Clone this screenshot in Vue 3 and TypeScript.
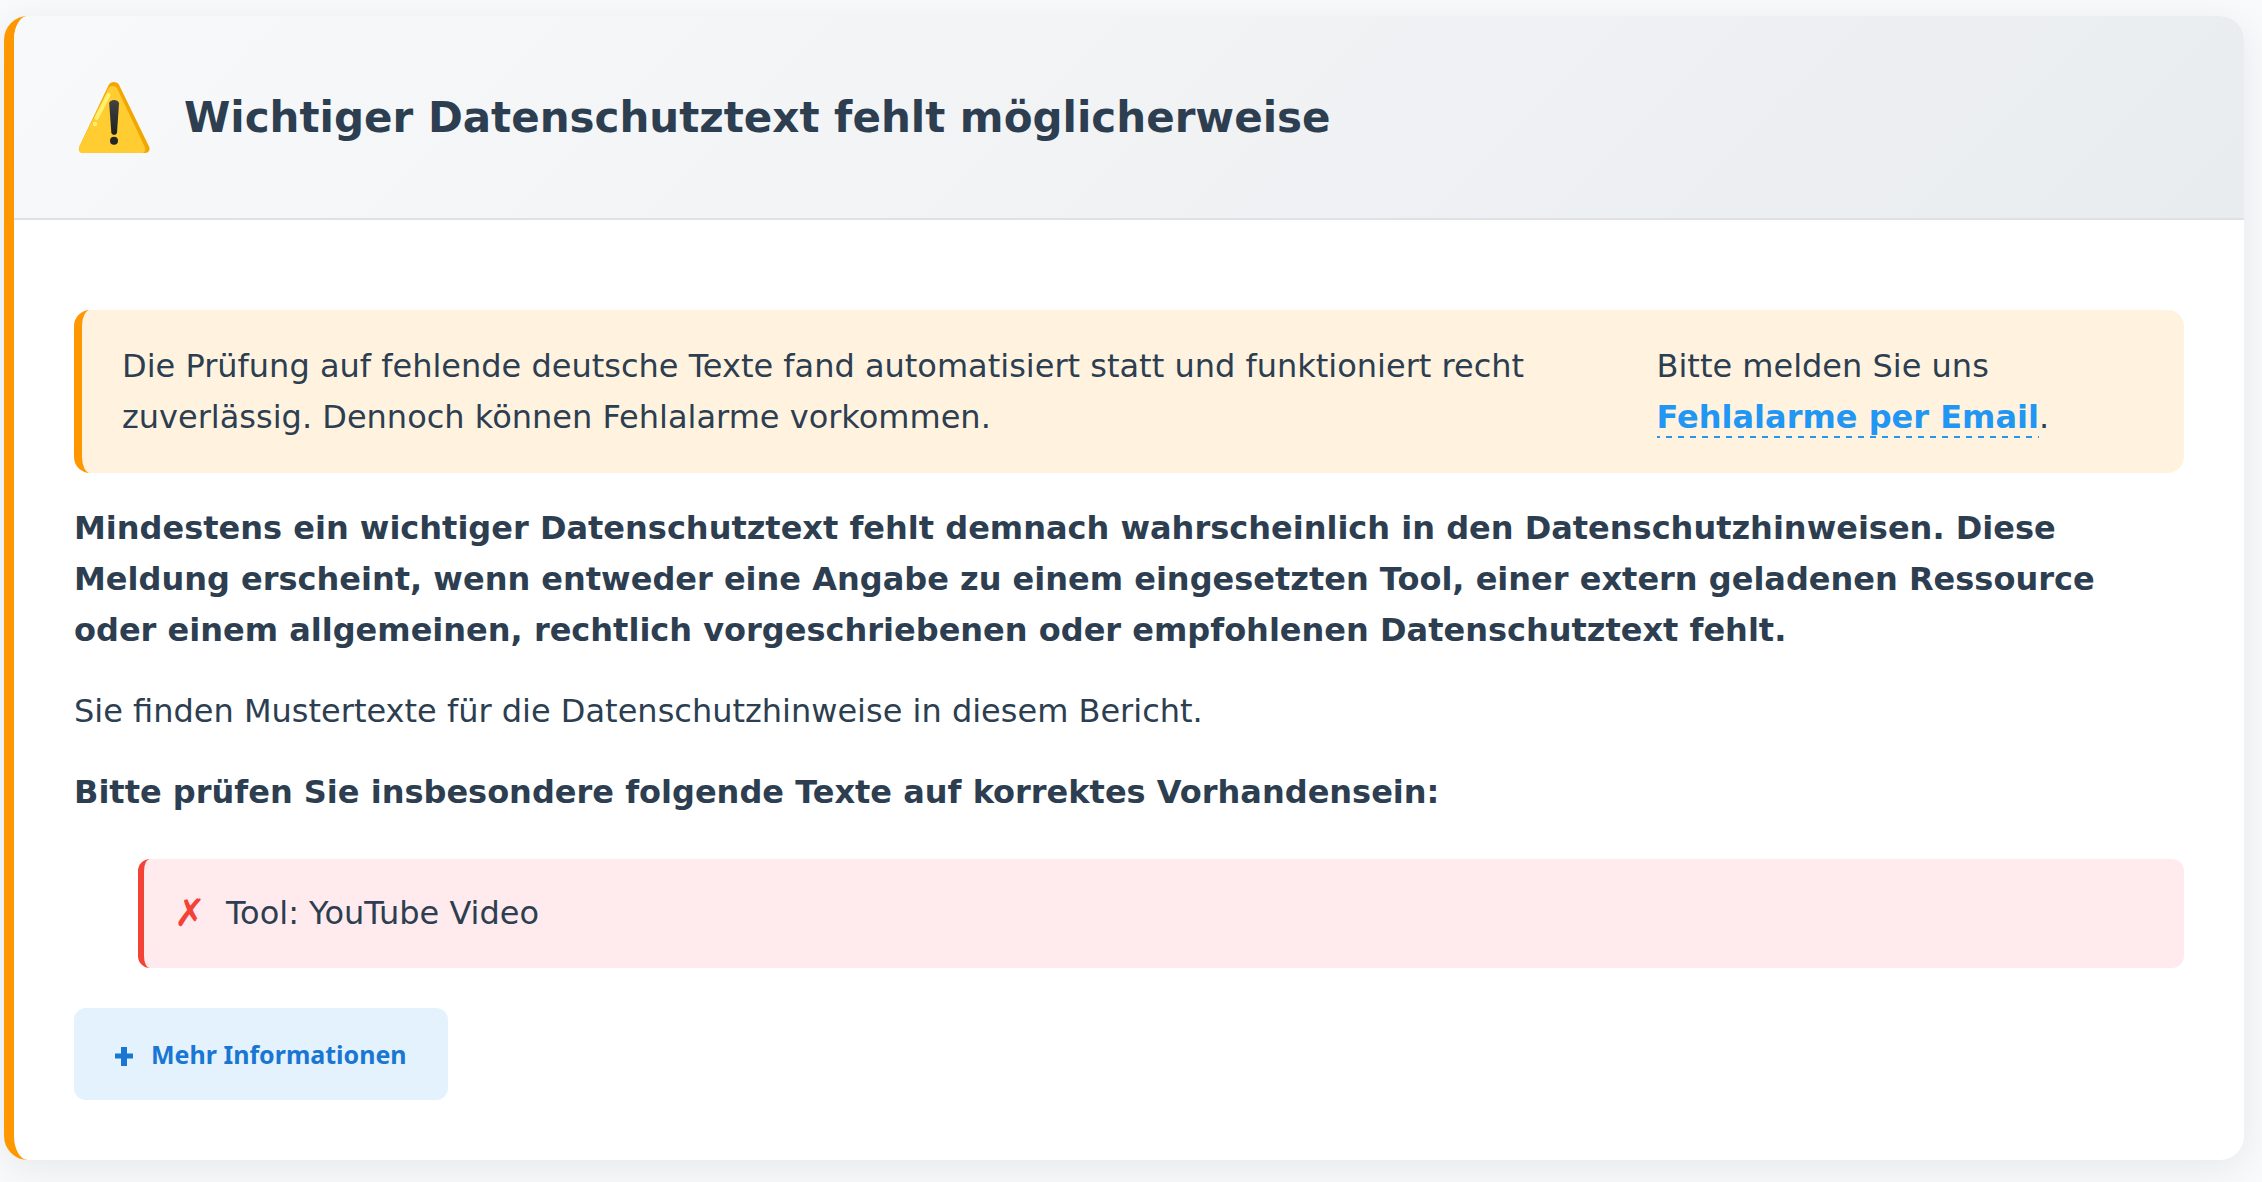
<script setup lang="ts">
import { ref } from 'vue'

const missingTexts: string[] = ['Tool: YouTube Video']
const expanded = ref(false)
</script>

<template>
  <main class="page">
    <section class="card">
      <header class="card-header">
        <svg class="warn-icon" viewBox="0 0 80 80" role="img" aria-label="Warnung">
          <defs>
            <linearGradient id="mark" x1="0" y1="0" x2="0" y2="1">
              <stop offset="0" stop-color="#424242" />
              <stop offset="1" stop-color="#212121" />
            </linearGradient>
          </defs>
          <path
            fill="#f2a600"
            d="M34.8 7.8 C36.8 4 43 4 45 7.8 L75 69.5 C76.600 73 74.500 76 71 76 H9 C5.500 76 4 73 5.400 69.500 Z"
          />
          <path
            fill="#ffcc32"
            d="M34.400 11.500 C35.600 8.200 41.400 8.200 43.200 11.500 L70.600 69.500 C72 72.500 71.200 75.400 68.600 76 H9 C5.500 76 4 73 5.400 69.500 Z"
          />
          <path stroke="#fff170" stroke-width="4" stroke-linecap="round" d="M34.600 18 L22.600 41" />
          <circle cx="21" cy="47" r="2.200" fill="#fff170" />
          <path
            fill="url(#mark)"
            d="M35.200 26.500 C35.200 21.700 45 21.700 45 26.500 L43 55.500 C42.700 58.600 37.600 58.600 37.300 55.500 Z"
          />
          <circle cx="40" cy="63.800" r="4" fill="#262626" />
        </svg>
        <h1 class="title">Wichtiger Datenschutztext fehlt möglicherweise</h1>
      </header>

      <div class="card-body">
        <div class="notice">
          <p>
            Die Prüfung auf fehlende deutsche Texte fand automatisiert statt und funktioniert recht
            zuverlässig. Dennoch können Fehlalarme vorkommen.
          </p>
          <p>Bitte melden Sie uns <a class="mail-link" href="#fehlalarm">Fehlalarme per Email</a>.</p>
        </div>

        <p class="strong">
          Mindestens ein wichtiger Datenschutztext fehlt demnach wahrscheinlich in den
          Datenschutzhinweisen. Diese Meldung erscheint, wenn entweder eine Angabe zu einem
          eingesetzten Tool, einer extern geladenen Ressource oder einem allgemeinen, rechtlich
          vorgeschriebenen oder empfohlenen Datenschutztext fehlt.
        </p>
        <p>Sie finden Mustertexte für die Datenschutzhinweise in diesem Bericht.</p>
        <p class="strong">Bitte prüfen Sie insbesondere folgende Texte auf korrektes Vorhandensein:</p>

        <ul class="missing">
          <li v-for="text in missingTexts" :key="text">
            <span class="cross" aria-hidden="true">✗</span>
            <span>{{ text }}</span>
          </li>
        </ul>

        <button class="more" type="button" :aria-expanded="expanded" @click="expanded = !expanded">
          <svg class="plus" viewBox="0 0 18 24" aria-hidden="true">
            <path fill="currentColor" d="M6 5h6v6.500h6v5h-6V24H6v-7.500H0v-5h6z" />
          </svg>
          <span>Mehr Informationen</span>
        </button>
      </div>
    </section>
  </main>
</template>

<style>
body {
  background: #f8fafc;
}
</style>

<style scoped>
.page {
  padding: 16px 18px 22px 4px;
  font-family: "DejaVu Sans", sans-serif;
  font-size: 32px;
  line-height: 51px;
  color: #2c3e50;
}

.card {
  border-left: 10px solid #ff9800;
  border-radius: 24px;
  background: #fff;
  box-shadow: 0 8px 40px rgba(0, 0, 0, 0.08);
  overflow: hidden;
}

.card-header {
  display: flex;
  align-items: center;
  gap: 30px;
  padding: 61px 60px;
  border-bottom: 2px solid #dee2e6;
  background: linear-gradient(135deg, #f8f9fa 0%, #e9ecef 100%);
}

.warn-icon {
  flex: none;
  width: 80px;
  height: 80px;
}

.title {
  margin: 0;
  font-size: 42px;
  line-height: 51px;
  font-weight: 700;
}

.card-body {
  padding: 90px 60px 60px;
}

p {
  margin: 0 0 30px;
}

.strong {
  font-weight: 700;
}

.notice {
  display: grid;
  grid-template-columns: 3fr 1fr;
  gap: 72px;
  margin-bottom: 30px;
  padding: 31px 40px 30px;
  border-left: 8px solid #ff9800;
  border-radius: 16px;
  background: #fff3e0;
}

.notice p {
  margin: 0;
}

/* Underline with equal dashes and gaps, wider spaced than a dashed border */
.mail-link {
  padding-bottom: 2px;
  color: #2196f3;
  font-weight: 700;
  text-decoration: none;
  background: repeating-linear-gradient(
      90deg,
      #2196f3 0 3px,
      transparent 3px 9px,
      #2196f3 9px 12px
    )
    left bottom / 100% 2px no-repeat;
}

.missing {
  margin: 41px 0 40px;
  padding: 0 0 0 64px;
  list-style: none;
}

.missing li {
  display: flex;
  align-items: center;
  gap: 20px;
  padding: 29px 30px;
  border-left: 6px solid #f44336;
  border-radius: 12px;
  background: #ffebee;
}

.cross {
  width: 32px;
  font-size: 38px;
  font-weight: 700;
  color: #f44336;
}

.more {
  display: inline-flex;
  align-items: center;
  gap: 18px;
  padding: 26px 41px;
  border: 0;
  border-radius: 12px;
  background: #e3f2fd;
  color: #1976d2;
  font-family: "Noto Sans", sans-serif;
  font-size: 25px;
  line-height: 40px;
  font-weight: 700;
  cursor: pointer;
}

.plus {
  width: 18px;
  height: 24px;
}
</style>
